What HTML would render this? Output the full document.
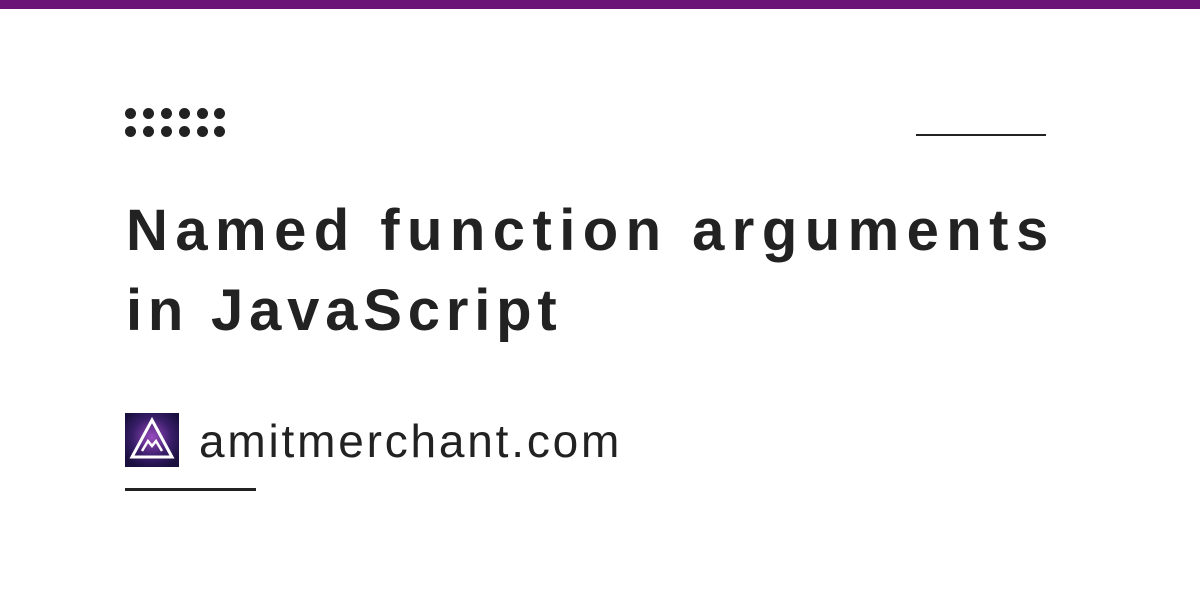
<!DOCTYPE html>
<html><head><style>
body{margin:0;width:1200px;height:600px;background:#fff;position:relative;overflow:hidden;font-family:"Liberation Sans",sans-serif;color:#222}
.bar{position:absolute;left:0;top:0;width:1200px;height:9px;background:#6b1478}
.dot{position:absolute;width:11px;height:11px;border-radius:50%;background:#222}
.t{position:absolute;left:126px;font-weight:bold;font-size:58px;letter-spacing:7.45px;white-space:nowrap;color:#222}
.line{position:absolute;height:3px;background:#222}
.d{position:absolute;left:199px;top:414px;font-size:46px;letter-spacing:2.8px;color:#222;white-space:nowrap}
</style></head><body>
<div class="bar"></div>
<div class="dot" style="left:125px;top:108px"></div><div class="dot" style="left:143px;top:108px"></div><div class="dot" style="left:161px;top:108px"></div><div class="dot" style="left:179px;top:108px"></div><div class="dot" style="left:197px;top:108px"></div><div class="dot" style="left:214px;top:108px"></div>
<div class="dot" style="left:125px;top:126px"></div><div class="dot" style="left:143px;top:126px"></div><div class="dot" style="left:161px;top:126px"></div><div class="dot" style="left:179px;top:126px"></div><div class="dot" style="left:197px;top:126px"></div><div class="dot" style="left:214px;top:126px"></div>
<div class="line" style="left:916px;top:134px;width:130px;height:2px"></div>
<div class="t" style="top:197px">Named function arguments</div>
<div class="t" style="top:277px;letter-spacing:5.8px">in JavaScript</div>
<svg style="position:absolute;left:125px;top:413px" width="54" height="54" viewBox="0 0 54 54">
<defs><radialGradient id="g" cx="50%" cy="45%" r="60%"><stop offset="0" stop-color="#9a4cc0"/><stop offset="0.6" stop-color="#3a1e6a"/><stop offset="1" stop-color="#1a1040"/></radialGradient></defs>
<rect width="54" height="54" fill="url(#g)"/>
<polygon points="27,7 47,44 7,44" fill="none" stroke="#fff" stroke-width="3"/>
<polyline points="17,38 23,28 27,33 31,28 37,38" fill="none" stroke="#fff" stroke-width="2.5"/>
</svg>
<div class="d">amitmerchant.com</div>
<div class="line" style="left:125px;top:488px;width:131px"></div>
</body></html>
